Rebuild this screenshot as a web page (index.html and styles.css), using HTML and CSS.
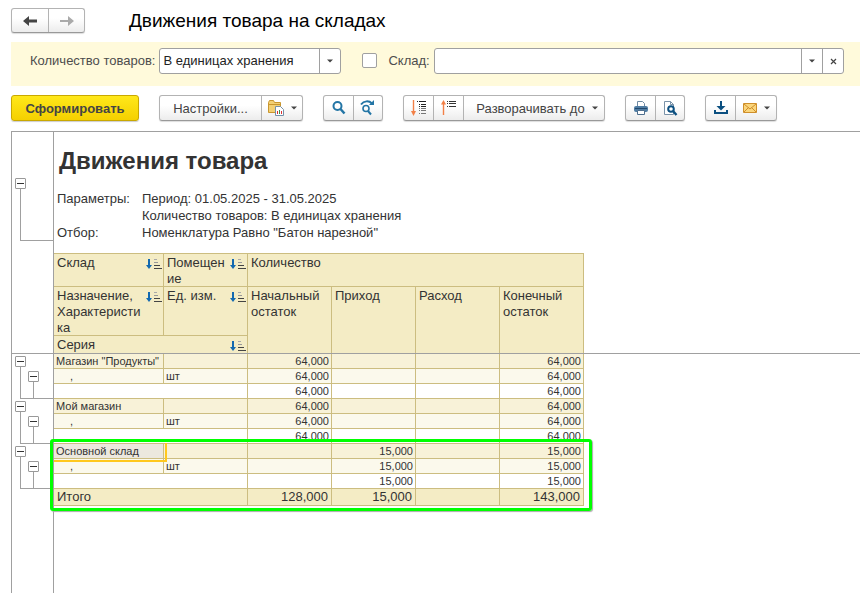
FILE: index.html
```html
<!DOCTYPE html>
<html lang="ru">
<head>
    <meta charset="UTF-8">
    <meta name="viewport" content="width=device-width, initial-scale=1.0">
    <title>Движения товара на складах</title>
    <link rel="stylesheet" href="styles.css">
</head>
<body>

    <svg class="sprite" aria-hidden="true">
        <symbol id="sort" viewBox="0 0 17 12">
            <path d="M3 1h2v6h2L4 11 1 7h2z" fill="#1369b0"/>
            <path d="M9 1.500h3" stroke="#aaa"/>
            <path d="M9 4.500h4" stroke="#999"/>
            <path d="M9 7.500h6M9 10.500h8" stroke="#444"/>
        </symbol>
        <symbol id="caret" viewBox="0 0 6 4">
            <path d="M0 0.500h6L3 3.500z" fill="#444"/>
        </symbol>
    </svg>

    <header>
        <div class="group nav">
            <button type="button" aria-label="Назад">
                <svg width="16" height="12" viewBox="0 0 16 12"><path d="M1 6l6-5v3.500h8v3H7V11z" fill="#444"/></svg>
            </button>
            <button type="button" aria-label="Вперед">
                <svg width="16" height="12" viewBox="0 0 16 12"><path d="M15 6l-6-5v4H1v2h8v4z" fill="#aaa"/></svg>
            </button>
        </div>
        <h1>Движения товара на складах</h1>
    </header>

    <form class="filters">
        <label for="quantity">Количество товаров:</label>
        <div class="field quantity">
            <select id="quantity">
                <option>В единицах хранения</option>
            </select>
            <button type="button" aria-label="Выбрать количество"><svg width="6" height="4"><use href="#caret"/></svg></button>
        </div>
        <input type="checkbox" id="use-store" aria-label="Использовать отбор по складу">
        <label for="store">Склад:</label>
        <div class="field store">
            <input type="text" id="store">
            <button type="button" aria-label="Выбрать склад"><svg width="6" height="4"><use href="#caret"/></svg></button>
            <button type="button" aria-label="Очистить"><svg width="7" height="7" viewBox="0 0 7 7"><path d="M1 1l5 5M6 1L1 6" stroke="#444" stroke-width="1.200"/></svg></button>
        </div>
    </form>

    <div class="toolbar">
        <button type="button" class="primary">Сформировать</button>

        <div class="group">
            <button type="button" class="settings">Настройки...</button>
            <button type="button" class="drop" aria-label="Варианты отчета">
                <svg width="18" height="18" viewBox="0 0 18 18">
                    <path d="M1.500 3.500l1-2h4l1 2h6v10h-12z" fill="#f3d074" stroke="#c9962e"/>
                    <path d="M2 5.500h11" stroke="#c9962e"/>
                    <path d="M8.500 7.500h5l3 3v6h-8z" fill="#fff" stroke="#7590a8"/>
                    <path d="M10.500 15v-3M14.500 15v-3" stroke="#d33"/>
                    <path d="M12.500 15v-4" stroke="#3a8f4b"/>
                </svg>
                <svg width="6" height="4"><use href="#caret"/></svg>
            </button>
        </div>

        <div class="group">
            <button type="button" aria-label="Найти">
                <svg width="16" height="16" viewBox="0 0 16 16"><circle cx="6.500" cy="6" r="4" fill="none" stroke="#2375a5" stroke-width="2"/><path d="M9.500 9l4 4.500" stroke="#2375a5" stroke-width="2.500"/></svg>
            </button>
            <button type="button" aria-label="Найти далее">
                <svg width="16" height="16" viewBox="0 0 16 16">
                    <path d="M1 4.500C4 .5 9 .5 12 3.500" fill="none" stroke="#2375a5" stroke-width="2"/>
                    <path d="M9 5h5V0z" fill="#2375a5"/>
                    <circle cx="6" cy="8.500" r="3" fill="none" stroke="#2375a5" stroke-width="1.600"/>
                    <path d="M8 11l3 3.500" stroke="#2375a5" stroke-width="2"/>
                </svg>
            </button>
        </div>

        <div class="group">
            <button type="button" aria-label="Развернуть все">
                <svg width="16" height="18" viewBox="0 0 16 18">
                    <path d="M2.500 1v13" stroke="#f28047" stroke-width="1.400"/><path d="M0 12h5l-2.500 5z" fill="#f28047"/>
                    <path d="M6 2.500h1M8 2.500h7M8 5.500h1M10 5.500h5M8 7.500h1M10 7.500h5" stroke="#222"/>
                    <path d="M8 9.500h1M10 9.500h5M8 11.500h1M10 11.500h5M8 14.500h1M10 14.500h5" stroke="#777"/>
                </svg>
            </button>
            <button type="button" aria-label="Свернуть все">
                <svg width="16" height="18" viewBox="0 0 16 18">
                    <path d="M2.500 4v12" stroke="#f28047" stroke-width="1.400"/><path d="M0 5.500h5L2.500 1z" fill="#f28047"/>
                    <path d="M6 2.500h1M8 2.500h7M6 4.500h1M8 4.500h7M6 7.500h1M8 7.500h7" stroke="#333"/>
                </svg>
            </button>
            <button type="button" class="expand">Разворачивать до <svg width="6" height="4"><use href="#caret"/></svg></button>
        </div>

        <div class="group">
            <button type="button" aria-label="Печать">
                <svg width="16" height="16" viewBox="0 0 16 16">
                    <path d="M4.500 6V1.500h5l2 2V6" fill="#fff" stroke="#6e8aa3"/>
                    <rect x="1" y="6" width="14" height="6" rx="2" fill="#4f7ca3"/>
                    <path d="M2 8.500h12" stroke="#21486d"/>
                    <path d="M4.500 10.500h7v4h-7z" fill="#fff" stroke="#4f6f8e"/>
                </svg>
            </button>
            <button type="button" aria-label="Предварительный просмотр">
                <svg width="16" height="16" viewBox="0 0 16 16">
                    <path d="M2.500 1.500h6l3 3v10h-9z" fill="#fff" stroke="#7a92a8"/>
                    <path d="M8.500 1.500v3h3" fill="none" stroke="#7a92a8"/>
                    <circle cx="9" cy="9" r="2.800" fill="#fff" stroke="#0b4f80" stroke-width="2"/>
                    <path d="M11 11l3.500 4" stroke="#0b4f80" stroke-width="2.400"/>
                </svg>
            </button>
        </div>

        <div class="group">
            <button type="button" aria-label="Сохранить">
                <svg width="16" height="16" viewBox="0 0 16 16"><path d="M8 1v6" stroke="#0b4f80" stroke-width="2"/><path d="M3.500 6h9L8 10.500z" fill="#0b4f80"/><path d="M2 10v3h12v-3" fill="none" stroke="#0b4f80" stroke-width="2"/></svg>
            </button>
            <button type="button" class="drop" aria-label="Отправить">
                <svg width="16" height="12" viewBox="0 0 16 12"><path d="M1.500 1.500h13v9h-13z" fill="#fbd67c" stroke="#cf8f2b"/><path d="M2 2l6 5 6-5M2 10l4.500-4.500M14 10L9.500 5.500" fill="none" stroke="#cf8f2b"/></svg>
                <svg width="6" height="4"><use href="#caret"/></svg>
            </button>
        </div>
    </div>

    <main class="sheet">
        <section class="pane pane-head">
            <div class="gutter">
                <div class="branch branch-title">
                    <div class="node"><button type="button" aria-label="Свернуть"></button></div>
                </div>
            </div>
            <div class="report">
                <h2>Движения товара</h2>
                <dl>
                    <dt>Параметры:</dt>
                    <dd>Период: 01.05.2025 - 31.05.2025</dd>
                    <dd>Количество товаров: В единицах хранения</dd>
                    <dt>Отбор:</dt>
                    <dd>Номенклатура Равно "Батон нарезной"</dd>
                </dl>
                <table class="columns">
                    <colgroup><col class="name"><col><col><col><col><col></colgroup>
                    <tr>
                        <th><div class="sorted"><span>Склад</span><svg><use href="#sort"/></svg></div></th>
                        <th><div class="sorted"><span>Помещен<br>ие</span><svg><use href="#sort"/></svg></div></th>
                        <th colspan="4">Количество</th>
                    </tr>
                    <tr>
                        <th><div class="sorted"><span>Назначение,<br>Характеристи<br>ка</span><svg><use href="#sort"/></svg></div></th>
                        <th><div class="sorted"><span>Ед. изм.</span><svg><use href="#sort"/></svg></div></th>
                        <th rowspan="2">Начальный остаток</th>
                        <th rowspan="2">Приход</th>
                        <th rowspan="2">Расход</th>
                        <th rowspan="2">Конечный остаток</th>
                    </tr>
                    <tr>
                        <th colspan="2"><div class="sorted"><span>Серия</span><svg><use href="#sort"/></svg></div></th>
                    </tr>
                </table>
            </div>
        </section>

        <section class="pane pane-body">
            <div class="gutter">
                <div class="branch">
                    <div class="node"><button type="button" aria-label="Свернуть"></button></div>
                    <div class="node inner"><button type="button" aria-label="Свернуть"></button></div>
                </div>
                <div class="branch">
                    <div class="node"><button type="button" aria-label="Свернуть"></button></div>
                    <div class="node inner"><button type="button" aria-label="Свернуть"></button></div>
                </div>
                <div class="branch">
                    <div class="node"><button type="button" aria-label="Свернуть"></button></div>
                    <div class="node inner"><button type="button" aria-label="Свернуть"></button></div>
                </div>
            </div>
            <div class="report">
                <div class="data">
                    <table class="rows">
                        <colgroup><col class="name"><col><col><col><col><col></colgroup>
                        <tr class="store-row"><td>Магазин "Продукты"</td><td></td><td>64,000</td><td></td><td></td><td>64,000</td></tr>
                        <tr class="unit-row"><td>,</td><td>шт</td><td>64,000</td><td></td><td></td><td>64,000</td></tr>
                        <tr><td colspan="2"></td><td>64,000</td><td></td><td></td><td>64,000</td></tr>
                        <tr class="store-row"><td>Мой магазин</td><td></td><td>64,000</td><td></td><td></td><td>64,000</td></tr>
                        <tr class="unit-row"><td>,</td><td>шт</td><td>64,000</td><td></td><td></td><td>64,000</td></tr>
                        <tr><td colspan="2"></td><td>64,000</td><td></td><td></td><td>64,000</td></tr>
                        <tr class="store-row"><td class="selected">Основной склад</td><td></td><td></td><td>15,000</td><td></td><td>15,000</td></tr>
                        <tr class="unit-row"><td>,</td><td>шт</td><td></td><td>15,000</td><td></td><td>15,000</td></tr>
                        <tr><td colspan="2"></td><td></td><td>15,000</td><td></td><td>15,000</td></tr>
                        <tr class="total"><td colspan="2">Итого</td><td>128,000</td><td>15,000</td><td></td><td>143,000</td></tr>
                    </table>
                    <div class="highlight"></div>
                </div>
            </div>
        </section>
    </main>

</body>
</html>
```
FILE: styles.css
```css
* {
    box-sizing: border-box;
}
body {
    margin: 0;
    min-height: 100vh;
    display: flex;
    flex-direction: column;
    background-color: #fff;
    color: #333;
    font-family: "Liberation Sans", Arial, sans-serif;
    font-size: 13px;
}
button, input, select {
    font: inherit;
    color: inherit;
    margin: 0;
}
button {
    padding: 0;
    cursor: pointer;
}
.sprite {
    display: none;
}

/* Заголовок */
header {
    display: flex;
    align-items: center;
    gap: 44px;
    padding: 8px 11px 0;
    height: 33px;
}
h1 {
    margin: 0;
    font-size: 19px;
    font-weight: normal;
    color: #000;
}

/* Группы кнопок */
.group {
    display: flex;
    height: 26px;
    border: 1px solid #b3b3b3;
    border-bottom-color: #999;
    border-radius: 3px;
    background: linear-gradient(#fff 40%, #ececec);
    box-shadow: 0 1px 1px #ddd;
}
.group button {
    display: flex;
    align-items: center;
    justify-content: center;
    gap: 6px;
    width: 29px;
    border: none;
    background: none;
    color: #444;
}
.group button + button {
    width: 30px;
    border-left: 1px solid #b3b3b3;
}
.group button:last-child {
    width: 29px;
}
.nav {
    height: 25px;
}
.nav button, .nav button:last-child {
    width: 36px;
}
.group .settings {
    width: 101px;
}
.group button.drop {
    width: 41px;
}
.group button.expand {
    gap: 7px;
    padding-left: 6px;
    width: 141px;
}

/* Отборы */
.filters {
    display: flex;
    align-items: flex-start;
    margin: 9px 0 0 11px;
    padding: 6px 16px 12px 19px;
    background-color: #fffadb;
    color: #4d4d4d;
}
.filters label {
    line-height: 26px;
}
.field {
    display: flex;
    height: 26px;
    border: 1px solid #a0a0a0;
    border-radius: 3px;
    background-color: #fff;
    overflow: hidden;
}
.field select, .field input {
    flex: 1;
    min-width: 0;
    padding: 0 3px 1px;
    border: none;
    background: none;
    appearance: none;
    color: #222;
    outline: none;
}
.field button {
    display: flex;
    align-items: center;
    justify-content: center;
    width: 21px;
    border: none;
    border-left: 1px solid #a0a0a0;
    background: none;
}
.quantity {
    width: 182px;
    margin: 0 21px 0 4px;
}
.store {
    flex: 1;
    margin-left: 4px;
}
input[type="checkbox"] {
    appearance: none;
    width: 15px;
    height: 15px;
    margin: 5px 11px 0 0;
    border: 1px solid #a0a0a0;
    border-radius: 2px;
    background-color: #fff;
}

/* Командная панель */
.toolbar {
    display: flex;
    gap: 20px;
    padding: 9px 11px 10px;
}
.primary {
    width: 128px;
    height: 26px;
    border: 1px solid #c9a800;
    border-radius: 3px;
    background: linear-gradient(#ffe81a, #f5d000);
    box-shadow: 0 1px 1px #ccc;
    font-weight: bold;
    color: #444;
}

/* Табличный документ */
.sheet {
    flex: 1;
    display: flex;
    flex-direction: column;
    margin-left: 11px;
    border-top: 1px solid #a0a0a0;
    border-left: 1px solid #a0a0a0;
}
.pane {
    display: flex;
}
.pane-head {
    border-bottom: 1px solid #a0a0a0;
}
.pane-body {
    flex: 1;
}
.gutter {
    flex: none;
    width: 42px;
    border-right: 1px solid #a0a0a0;
}
.branch {
    display: flex;
    gap: 2px;
    height: 45px;
    padding: 2px 0 0 3px;
    background: linear-gradient(#a0a0a0, #a0a0a0) 8px 100% / 100% 1px no-repeat;
}
.branch-title {
    height: 63px;
    margin-top: 46px;
    padding-top: 0;
}
.node {
    width: 11px;
    background: linear-gradient(#a0a0a0, #a0a0a0) 5px 0 / 1px 100% no-repeat;
}
.node.inner {
    margin-top: 15px;
}
.node button {
    display: block;
    width: 11px;
    height: 11px;
    border: 1px solid #999;
    border-radius: 1px;
    background: linear-gradient(#333, #333) center / 7px 1px no-repeat #fff;
}
.report {
    flex: 1;
    line-height: 16px;
}
h2 {
    margin: 14px 0 0 5px;
    font-size: 24px;
    line-height: 30px;
}
dl {
    display: grid;
    grid-template-columns: 85px 1fr;
    margin: 14px 0 12px 3px;
    line-height: 17px;
}
dd {
    grid-column: 2;
    margin: 0;
}
table {
    width: 530px;
    table-layout: fixed;
    border-collapse: separate;
    border-spacing: 0;
}
col {
    width: 84px;
}
col.name {
    width: 110px;
}
th, td {
    border-right: 1px solid #ccbd80;
    border-bottom: 1px solid #ccbd80;
}
th {
    padding: 1px 3px 0;
    background-color: #f4ecc5;
    font-weight: normal;
    text-align: left;
    vertical-align: top;
}
.columns {
    border-top: 1px solid #ccbd80;
}
.columns tr:last-child th, .columns th[rowspan] {
    border-bottom: none;
}
.columns tr:last-child th {
    height: 17px;
}
.sorted {
    display: flex;
    justify-content: space-between;
    margin-bottom: -1px;
    white-space: nowrap;
}
.sorted svg {
    flex: none;
    width: 17px;
    height: 12px;
    margin: 3px -2px 0 -4px;
}
td {
    height: 15px;
    padding: 0 2px;
    font-size: 11px;
    line-height: 14px;
    text-align: right;
}
td:first-child, .unit-row td:nth-child(2) {
    text-align: left;
}
.store-row {
    background-color: #f8f2d8;
}
.unit-row {
    background-color: #fbf9ec;
}
.unit-row td:first-child {
    padding-left: 16px;
}
.total {
    background-color: #f4ecc5;
}
.total td {
    padding: 0 3px;
    font-size: 13px;
    line-height: 16px;
}
.selected {
    position: relative;
    background-color: #ece8de;
}
.selected::after {
    content: "";
    position: absolute;
    inset: -1px -4px -4px 0;
    border: solid #ffc81e;
    border-width: 0 2px 2px 0;
}
.data {
    position: relative;
    width: 530px;
}
.highlight {
    position: absolute;
    inset: 85px -8px -5px -4px;
    border: 3px solid #00ff00;
    border-radius: 3px;
    box-shadow: 1px 1px 1px #aaa;
    pointer-events: none;
}
```
